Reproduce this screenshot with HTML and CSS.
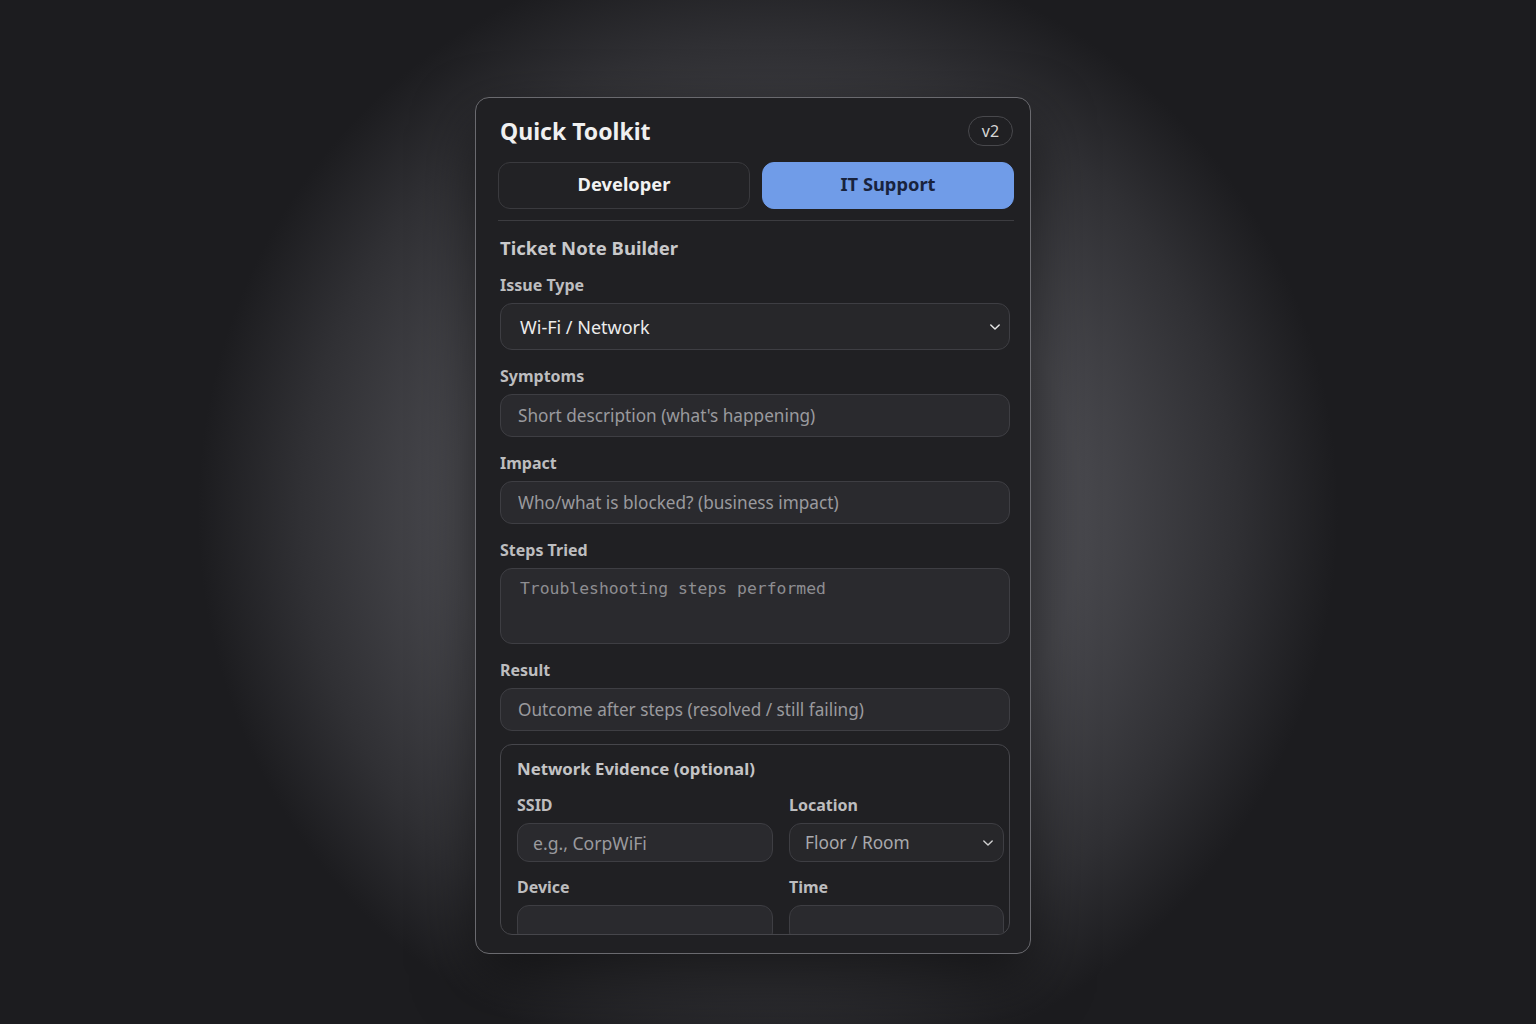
FILE: index.html
```html
<!DOCTYPE html>
<html lang="en">
<head>
  <meta charset="UTF-8">
  <meta name="viewport" content="width=device-width, initial-scale=1.0">
  <title>Quick Toolkit</title>
  <link rel="stylesheet" href="styles.css">
</head>
<body>
  <div class="toolkit">
    <div class="toolkit-header">
      <h1>Quick Toolkit</h1>
      <span class="version">v2</span>
    </div>

    <div class="tabs">
      <button class="tab">Developer</button>
      <button class="tab active">IT Support</button>
    </div>

    <div class="panel">
      <h2>Ticket Note Builder</h2>

      <div class="field">
        <label>Issue Type</label>
        <div class="select">
          <span>Wi-Fi / Network</span>
          <svg width="12" height="8" viewBox="0 0 12 8"><path d="M1.8 2 6 6l4.2-4" fill="none" stroke="#e6e6e6" stroke-width="1.5" stroke-linecap="round" stroke-linejoin="round"/></svg>
        </div>
      </div>

      <div class="field">
        <label>Symptoms</label>
        <input type="text" placeholder="Short description (what's happening)">
      </div>

      <div class="field">
        <label>Impact</label>
        <input type="text" placeholder="Who/what is blocked? (business impact)">
      </div>

      <div class="field">
        <label>Steps Tried</label>
        <textarea placeholder="Troubleshooting steps performed"></textarea>
      </div>

      <div class="field">
        <label>Result</label>
        <input type="text" placeholder="Outcome after steps (resolved / still failing)">
      </div>

      
      <div class="evidence">
        <h3>Network Evidence (optional)</h3>
        <div class="evidence-grid">
          <div class="mini-field">
            <label>SSID</label>
            <input type="text" placeholder="e.g., CorpWiFi">
          </div>
          <div class="mini-field">
            <label>Location</label>
            <div class="select small">
              <span>Floor / Room</span>
              <svg width="12" height="8" viewBox="0 0 12 8"><path d="M1.8 2 6 6l4.2-4" fill="none" stroke="#d0d0d0" stroke-width="1.4" stroke-linecap="round" stroke-linejoin="round"/></svg>
            </div>
          </div>
          <div class="mini-field">
            <label>Device</label>
            <input type="text">
          </div>
          <div class="mini-field">
            <label>Time</label>
            <input type="text">
          </div>
        </div>
      </div>
    </div>
  </div>
</body>
</html>
```

FILE: styles.css
```css
/* Page background with soft glow behind the card */
body {
  margin: 0;
  height: 100vh;
  font-family: 'Noto Sans', 'Open Sans', sans-serif;
  color: #e6e6e6;
  background: radial-gradient(ellipse 570px 570px at 50% 50%, #4e4e54 0%, #48484d 55%, #303034 82%, #1c1c1f 100%);
  background-color: #1c1c1f;
  display: flex;
  justify-content: center;
  align-items: flex-start;
}

/* Main card */
.toolkit {
  width: 556px;
  height: 857px;
  margin: 97px 30px 0 0;
  box-sizing: border-box;
  background: #202023;
  border: 1.5px solid #6a6a6f;
  border-radius: 14px;
  box-shadow: 0 24px 60px rgba(0, 0, 0, 0.55);
  padding: 18px 16px 0 22px;
  overflow: hidden;
}

/* Header */
.toolkit-header {
  display: flex;
  justify-content: space-between;
  align-items: center;
  height: 30px;
  padding-left: 2px;
}

h1 {
  margin: 0;
  font-size: 23px;
  font-weight: 700;
  color: #f0f0f0;
}

.version {
  width: 45px;
  height: 30px;
  box-sizing: border-box;
  margin-right: 1px;
  border: 1px solid #48484c;
  border-radius: 15px;
  display: flex;
  align-items: center;
  justify-content: center;
  font-size: 16px;
  color: #d6d6d6;
}

/* Tabs */
.tabs {
  display: grid;
  grid-template-columns: 1fr 1fr;
  gap: 12px;
  margin-top: 16px;
  padding-bottom: 11px;
  border-bottom: 1px solid #3c3c40;
}

.tab {
  height: 47px;
  padding: 0 0 4px;
  border: 1px solid #3a3a3e;
  border-radius: 12px;
  background: #222225;
  color: #f2f2f2;
  font-family: inherit;
  font-size: 18.3px;
  font-weight: 700;
}

.tab.active {
  background: #709ce8;
  border-color: #709ce8;
  color: #18233d;
}

/* Form panel */
.panel {
  padding: 15px 4px 0 2px;
}

h2 {
  margin: 0 0 15px;
  font-size: 18.5px;
  line-height: 24px;
  font-weight: 700;
  color: #c9c9cb;
}

.field {
  margin-bottom: 16px;
}

label {
  display: block;
  margin-bottom: 8px;
  font-size: 16px;
  line-height: 20px;
  font-weight: 700;
  color: #bdbdbf;
}

input,
textarea,
.select {
  display: block;
  width: 100%;
  box-sizing: border-box;
  height: 43px;
  background: #2a2a2e;
  border: 1px solid #3e3e43;
  border-radius: 12px;
  padding: 0 17px;
  font-family: inherit;
  font-size: 17.2px;
  color: #e6e6e6;
  outline: none;
}

input::placeholder {
  color: #9a9a9e;
}

.select {
  height: 47px;
  display: flex;
  align-items: center;
  justify-content: space-between;
  padding: 0 8px 0 19px;
  background: #27272a;
  font-size: 18px;
  color: #ececec;
}

textarea {
  height: 76px;
  padding: 10px 19px;
  resize: none;
  font-family: 'DejaVu Sans Mono', 'Liberation Mono', monospace;
  font-size: 16.4px;
}

textarea::placeholder {
  color: #8e8e92;
}

/* Evidence box */
.evidence {
  margin-top: -3px;
  height: 191px;
  box-sizing: border-box;
  border: 1px solid #46464b;
  border-radius: 12px;
  padding: 13px 0 0 16px;
  overflow: hidden;
}

h3 {
  margin: 0 0 15px;
  font-size: 16.8px;
  line-height: 22px;
  font-weight: 700;
  color: #c4c4c6;
}

.evidence-grid {
  display: grid;
  grid-template-columns: 256px 215px;
  column-gap: 16px;
  row-gap: 15px;
}

.mini-field label {
  margin-bottom: 8px;
}

.mini-field input,
.mini-field .select {
  height: 39px;
  padding: 0 15px;
  font-size: 17.6px;
}

.select.small {
  padding: 0 9px 0 15px;
  font-size: 17.3px;
  color: #a9a9ad;
}
```
